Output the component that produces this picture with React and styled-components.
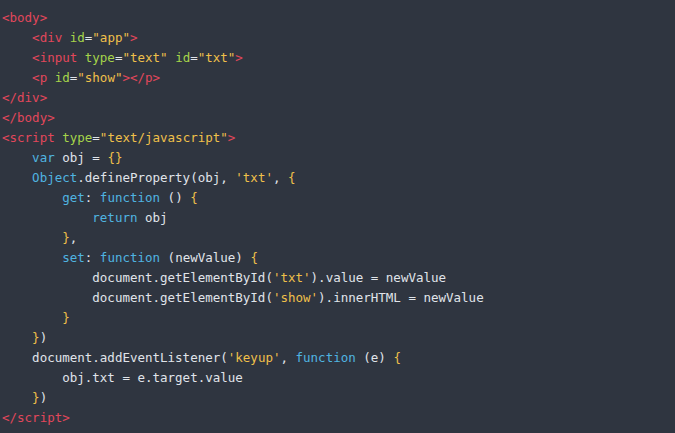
import styled, { createGlobalStyle } from "styled-components";

const GlobalStyle = createGlobalStyle`
  html, body {
    margin: 0;
    padding: 0;
    background: #2f3540;
  }
`;

const colors = {
  tag: "#e2475b",
  attr: "#a6d44a",
  str: "#f0c04a",
  kw: "#4fb4e0",
  brace: "#f0c04a",
  plain: "#e0e4ea",
};

const CodeBlock = styled.pre`
  margin: 0;
  padding: 8px 2px 6px;
  min-height: 433px;
  box-sizing: border-box;
  background: #2f3540;
  font-family: "DejaVu Sans Mono", "Liberation Mono", monospace;
  font-size: 12.5px;
  line-height: 20px;
  color: ${colors.plain};
`;

const Line = styled.div`
  white-space: pre;
  height: 20px;
`;

const Token = styled.span`
  color: ${(p) => colors[p.$kind] || colors.plain};
`;

// [kind, text] pairs per line
const lines = [
  [["tag", "<body>"]],
  [["", "    "], ["tag", "<div "], ["attr", "id"], ["", "="], ["str", '"app"'], ["tag", ">"]],
  [["", "    "], ["tag", "<input "], ["attr", "type"], ["", "="], ["str", '"text"'], ["", " "], ["attr", "id"], ["", "="], ["str", '"txt"'], ["tag", ">"]],
  [["", "    "], ["tag", "<p "], ["attr", "id"], ["", "="], ["str", '"show"'], ["tag", "></p>"]],
  [["tag", "</div>"]],
  [["tag", "</body>"]],
  [["tag", "<script "], ["attr", "type"], ["", "="], ["str", '"text/javascript"'], ["tag", ">"]],
  [["", "    "], ["kw", "var"], ["", " obj = "], ["brace", "{}"]],
  [["", "    "], ["kw", "Object"], ["", ".defineProperty(obj, "], ["str", "'txt'"], ["", ", "], ["brace", "{"]],
  [["", "        "], ["kw", "get"], ["", ": "], ["kw", "function"], ["", " () "], ["brace", "{"]],
  [["", "            "], ["kw", "return"], ["", " obj"]],
  [["", "        "], ["brace", "}"], ["", ","]],
  [["", "        "], ["kw", "set"], ["", ": "], ["kw", "function"], ["", " (newValue) "], ["brace", "{"]],
  [["", "            document.getElementById("], ["str", "'txt'"], ["", ").value = newValue"]],
  [["", "            document.getElementById("], ["str", "'show'"], ["", ").innerHTML = newValue"]],
  [["", "        "], ["brace", "}"]],
  [["", "    "], ["brace", "}"], ["", ")"]],
  [["", "    document.addEventListener("], ["str", "'keyup'"], ["", ", "], ["kw", "function"], ["", " (e) "], ["brace", "{"]],
  [["", "        obj.txt = e.target.value"]],
  [["", "    "], ["brace", "}"], ["", ")"]],
  [["tag", "</script>"]],
];

const App = () => {
  return (
    <>
      <GlobalStyle />
      <CodeBlock>
        {lines.map((tokens, i) => (
          <Line key={i}>
            {tokens.map(([kind, text], j) => (
              <Token key={j} $kind={kind}>
                {text}
              </Token>
            ))}
          </Line>
        ))}
      </CodeBlock>
    </>
  );
};

export default App;
